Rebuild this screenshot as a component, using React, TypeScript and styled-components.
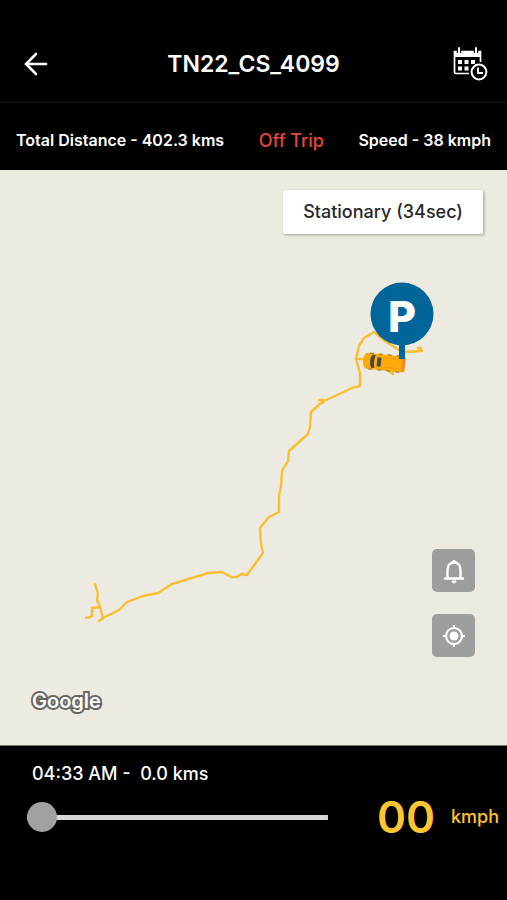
import React, { useState } from "react";
import styled, { createGlobalStyle } from "styled-components";

const GlobalStyle = createGlobalStyle`
  *, *::before, *::after { box-sizing: border-box; }
  body {
    margin: 0;
    background: #000;
    font-family: Inter, "Open Sans", "Liberation Sans", sans-serif;
  }
`;

const Screen = styled.div`
  display: flex;
  flex-direction: column;
  min-height: 100vh;
  background: #000;
  color: #fff;
`;

const Header = styled.header`
  display: grid;
  grid-template-columns: 40px 1fr 40px;
  align-items: center;
  padding: 40px 16px 14px;
  border-bottom: 1px solid #161616;
`;

const Title = styled.h1`
  margin: 0;
  font-size: 23px;
  line-height: 48px;
  font-weight: 600;
  text-align: center;
`;

const IconButton = styled.button`
  display: flex;
  align-items: center;
  justify-content: center;
  width: 40px;
  height: 40px;
  padding: 0;
  border: 0;
  background: none;
  color: #fff;
  cursor: pointer;
`;

const Summary = styled.section`
  display: flex;
  flex-wrap: wrap;
  justify-content: space-between;
  padding: 27px 16px 19px;
  font-size: 16px;
  line-height: 21px;
  font-weight: 600;
`;

const Status = styled.span`
  color: #e8443a;
  font-size: 18px;
  font-weight: 500;
`;

const MapArea = styled.main`
  position: relative;
  flex: 1;
  display: flex;
  flex-direction: column;
  justify-content: space-between;
  padding: 20px 24px 28px 32px;
  min-height: 480px;
  background: #edeae1;
  border-bottom: 1px solid #77766f;
`;

const RouteDrawing = styled.svg`
  position: absolute;
  inset: 0;
  width: 100%;
  height: 100%;
`;

const StopLabel = styled.div`
  position: relative;
  align-self: flex-end;
  padding: 10px 20px;
  border-radius: 2px;
  background: #fff;
  box-shadow: 1px 1px 3px rgba(0, 0, 0, 0.35);
  color: #292929;
  font-size: 18px;
  line-height: 24px;
  font-weight: 500;
`;

const MapFooter = styled.div`
  position: relative;
  display: flex;
  flex-direction: column;
`;

const MapButtons = styled.div`
  display: flex;
  flex-direction: column;
  align-self: flex-end;
  gap: 22px;
  margin: 0 8px 28px 0;
`;

const MapButton = styled(IconButton)`
  width: 43px;
  height: 43px;
  border-radius: 5px;
  background: #9e9e9c;
`;

const MapCredit = styled.a`
  align-self: flex-start;
  color: #fff;
  font-family: Inter, sans-serif;
  font-size: 20px;
  line-height: 32px;
  font-weight: 600;
  text-decoration: none;
  -webkit-text-stroke: 4px #666663;
  paint-order: stroke fill;
`;

const Playback = styled.footer`
  display: grid;
  grid-template-columns: 1fr auto;
  column-gap: 49px;
  padding: 15px 8px 53px 27px;
`;

const Reading = styled.label`
  grid-column: 1 / -1;
  padding-left: 5px;
  font-size: 18px;
  line-height: 26px;
  font-weight: 500;
  white-space: pre;
`;

const Timeline = styled.input`
  appearance: none;
  align-self: center;
  width: 100%;
  height: 30px;
  margin: 0;
  background: linear-gradient(#d7d7d7, #d7d7d7) center / 100% 5px no-repeat;
  cursor: pointer;

  &::-webkit-slider-thumb {
    appearance: none;
    width: 30px;
    height: 30px;
    border-radius: 50%;
    background: #a1a1a1;
  }
`;

const Speed = styled.div`
  display: flex;
  align-items: center;
  gap: 16px;
  color: #fdc530;
`;

const SpeedValue = styled.span`
  font-size: 44px;
  line-height: 60px;
  font-weight: 600;
`;

const SpeedUnit = styled.span`
  font-size: 18px;
  line-height: 24px;
  font-weight: 500;
`;

const BackIcon = () => (
  <svg width="26" height="26" viewBox="0 0 26 26" fill="none" stroke="currentColor" strokeWidth="2.6">
    <path d="M23 13H3M13 3L3 13l10 10" strokeLinecap="round" />
  </svg>
);

const ScheduleIcon = () => (
  <svg width="36" height="36" viewBox="1 0 36 36" fill="none" stroke="currentColor">
    <path d="M28.500 16V5.500H2.500V26a1.500 1.500 0 0 0 1.500 1.500h13" strokeWidth="1.7" />
    <path d="M2 5h27v6H2z" fill="currentColor" stroke="none" />
    <path d="M7 1v6M24 1v6" stroke="#000" strokeWidth="4.4" />
    <path d="M7 2v5M24 2v5" strokeWidth="2" strokeLinecap="round" />
    <path
      d="M6 14h4v4H6zM12.500 14h4v4h-4zM19 14h4v4h-4zM6 20.500h4v4H6zM12.500 20.500h4v4h-4z"
      fill="currentColor"
      stroke="none"
    />
    <circle cx="27" cy="26" r="9.500" fill="#000" stroke="none" />
    <circle cx="27" cy="26" r="7.400" strokeWidth="2" />
    <path d="M26 21.500v5.500h5" strokeWidth="1.900" />
  </svg>
);

const BellIcon = () => (
  <svg width="24" height="26" viewBox="0 0 24 26" fill="none" stroke="currentColor" strokeWidth="2.400">
    <path d="M5.500 20v-8c0-4.500 2.500-7.500 6.500-7.500s6.500 3 6.500 7.500v8" />
    <path d="M3 20.500h18" strokeLinecap="round" />
    <path d="M10.500 3.800a1.500 1.500 0 0 1 3 0zM10 23h4a2 2 0 0 1-4 0z" fill="currentColor" strokeWidth="1" />
  </svg>
);

const LocateIcon = () => (
  <svg width="24" height="24" viewBox="0 0 24 24" fill="none" stroke="currentColor" strokeWidth="2.200">
    <circle cx="12" cy="12" r="8" />
    <path d="M12 1v3M12 20v3M1 12h3M20 12h3" />
    <circle cx="12" cy="12" r="4.500" fill="currentColor" stroke="none" />
  </svg>
);

const TripMap = () => (
  <RouteDrawing viewBox="0 0 507 575" preserveAspectRatio="xMidYMid slice" role="img" aria-label="Trip route">
    <g fill="none" stroke="#f8bf32" strokeWidth="2.400" strokeLinejoin="round" strokeLinecap="round">
      <path d="M374 162L364 168L359 176L356 189L360 203V216L352 218L322 232L311 242L310 257L308 264L289 281L288 291L282 301L281 317L279 325V342L269 347L260 358L261 374L263 383L247 405L241 404L237 407H231L222 402L208 403L172 414L158 423L143 426L127 432L119 440L103 448L99 451" />
      <path d="M95 414L98 424L97 430L100 437L103 448M100 437L92 438V446L90 447L86 448" />
      <path d="M319 230h4v3M356 189h8M374 162l11 9 17 11 20-1-4-3h3v3" />
      <path d="M388 200l5 4v-4" />
    </g>
    <circle cx="402" cy="144" r="31.500" fill="#006699" />
    <text
      x="402"
      y="162"
      fill="#fff"
      textAnchor="middle"
      fontFamily="Inter, sans-serif"
      fontSize="43"
      fontWeight="800"
    >
      P
    </text>
    <g transform="translate(384 192.500) rotate(6)">
      <path d="M-18-8h37q2 0 2 2V6q0 2-2 2h-37Q-21 6-21 0t3-8z" fill="#fdaa0b" />
      <path d="M-15-8H19M-15 8H19" stroke="#8f6c2c" strokeDasharray="4 5" />
      <path d="M-12.500-6.500h3.500Q-11 0-9 6.500h-3.500Q-15.500 0-12.500-6.500z" fill="#454943" />
      <path d="M-7-4.500h4v9h-4z" fill="#454943" />
      <path d="M0-4.500h16M0 4.500h16" stroke="#f39d0c" />
      <path d="M18-7h3V7h-3z" fill="#e98a22" />
    </g>
    <path d="M399 173h6v16h-6z" fill="#006699" />
  </RouteDrawing>
);

export default function App() {
  const [position, setPosition] = useState(0);

  return (
    <>
      <GlobalStyle />
      <Screen>
        <Header>
          <IconButton type="button" aria-label="Back">
            <BackIcon />
          </IconButton>
          <Title>TN22_CS_4099</Title>
          <IconButton type="button" aria-label="Choose date and time">
            <ScheduleIcon />
          </IconButton>
        </Header>
        <Summary>
          <span>Total Distance - 402.3 kms</span>
          <Status>Off Trip</Status>
          <span>Speed - 38 kmph</span>
        </Summary>
        <MapArea>
          <TripMap />
          <StopLabel>Stationary (34sec)</StopLabel>
          <MapFooter>
            <MapButtons>
              <MapButton type="button" aria-label="Alerts">
                <BellIcon />
              </MapButton>
              <MapButton type="button" aria-label="Centre on vehicle">
                <LocateIcon />
              </MapButton>
            </MapButtons>
            <MapCredit href="#map">Google</MapCredit>
          </MapFooter>
        </MapArea>
        <Playback>
          <Reading htmlFor="timeline">{"04:33 AM -  0.0 kms"}</Reading>
          <Timeline
            id="timeline"
            type="range"
            min={0}
            max={100}
            value={position}
            onChange={(event) => setPosition(Number(event.target.value))}
          />
          <Speed>
            <SpeedValue>00</SpeedValue>
            <SpeedUnit>kmph</SpeedUnit>
          </Speed>
        </Playback>
      </Screen>
    </>
  );
}
